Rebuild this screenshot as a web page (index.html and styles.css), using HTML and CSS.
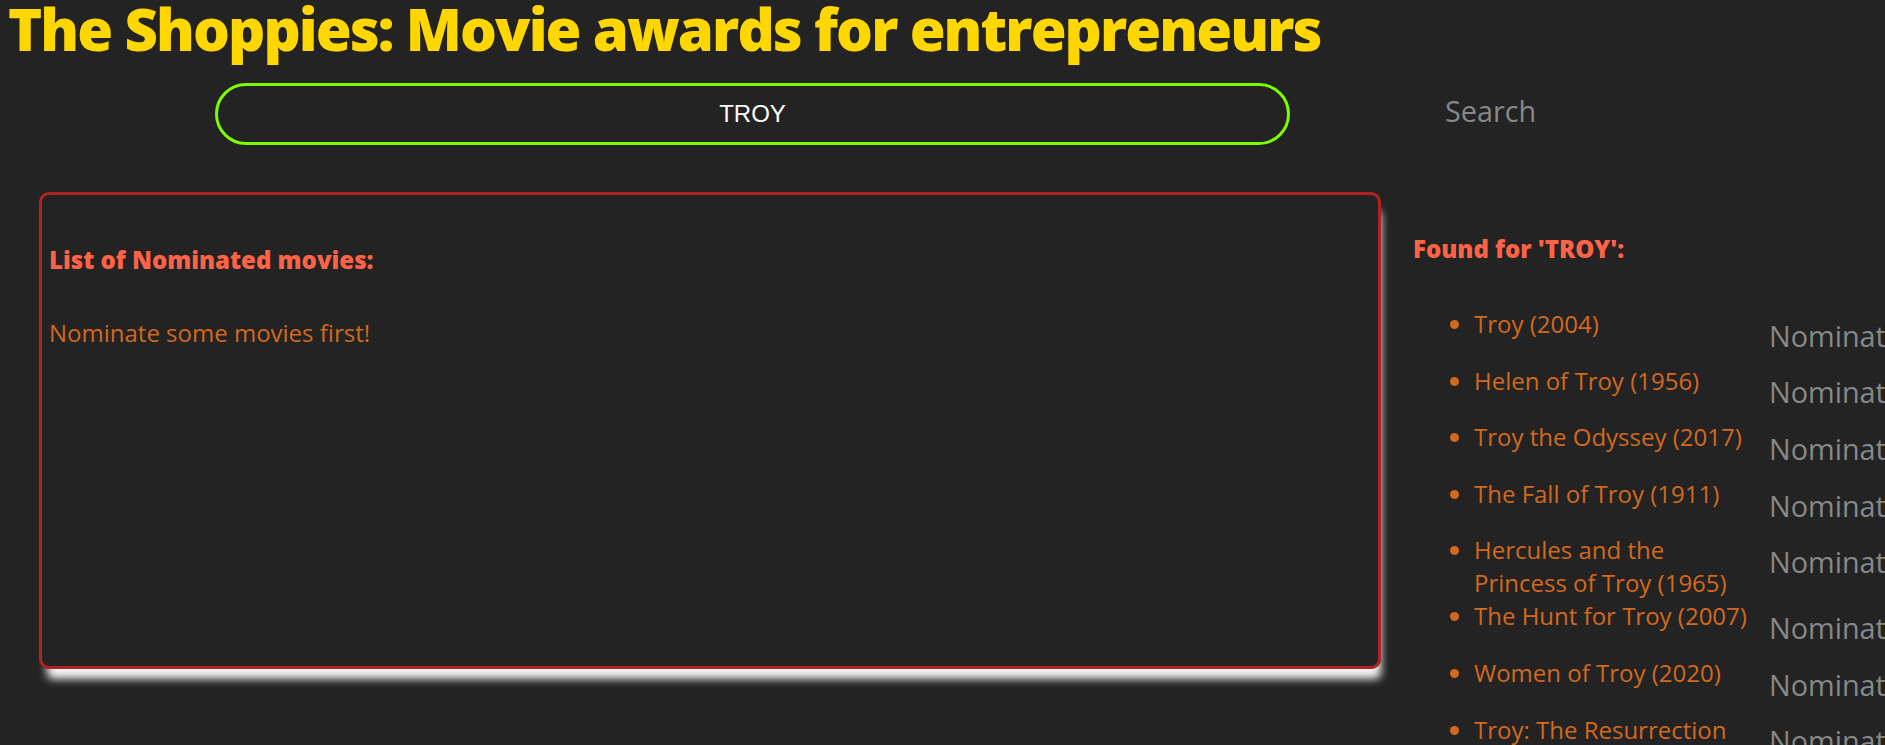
FILE: index.html
```html
<!DOCTYPE html>
<html lang="en">
<head>
<meta charset="utf-8">
<title>The Shoppies</title>
<link rel="stylesheet" href="styles.css">
</head>
<body>
<h1 class="title">The Shoppies: Movie awards for entrepreneurs</h1>
<form class="search">
  <input class="search-input" type="text" value="TROY">
  <button class="btn" type="button">Search</button>
</form>
<main class="content">
  <section class="nominations">
    <h3 class="heading">List of Nominated movies:</h3>
    <p class="empty">Nominate some movies first!</p>
  </section>
  <section class="results">
    <h3 class="heading results-heading">Found for 'TROY':</h3>
    <ul class="movie-list">
      <li><div class="row"><span class="movie">Troy (2004)</span><button class="btn" type="button">Nominate</button></div></li>
      <li><div class="row"><span class="movie">Helen of Troy (1956)</span><button class="btn" type="button">Nominate</button></div></li>
      <li><div class="row"><span class="movie">Troy the Odyssey (2017)</span><button class="btn" type="button">Nominate</button></div></li>
      <li><div class="row"><span class="movie">The Fall of Troy (1911)</span><button class="btn" type="button">Nominate</button></div></li>
      <li><div class="row"><span class="movie">Hercules and the Princess of Troy (1965)</span><button class="btn" type="button">Nominate</button></div></li>
      <li><div class="row"><span class="movie">The Hunt for Troy (2007)</span><button class="btn" type="button">Nominate</button></div></li>
      <li><div class="row"><span class="movie">Women of Troy (2020)</span><button class="btn" type="button">Nominate</button></div></li>
      <li><div class="row"><span class="movie">Troy: The Resurrection (2020)</span><button class="btn" type="button">Nominate</button></div></li>
      <li><div class="row"><span class="movie">Helen of Troy (2003)</span><button class="btn" type="button">Nominate</button></div></li>
      <li><div class="row"><span class="movie">Troy: Fall of a City (2018)</span><button class="btn" type="button">Nominate</button></div></li>
    </ul>
  </section>
</main>
</body>
</html>
```
FILE: styles.css
```css
html, body {
  margin: 0;
  padding: 0;
  background: #232323;
}
body {
  font-family: "Open Sans", "Liberation Sans", sans-serif;
  width: 2100px;
}
.title {
  margin: 0;
  padding-left: 8px;
  font-size: 58px;
  line-height: 1;
  font-weight: 800;
  letter-spacing: -1.9px;
  color: #ffd700;
  white-space: nowrap;
}
.search {
  display: flex;
  align-items: flex-start;
  margin-top: 25px;
  padding-left: 215px;
}
.search-input {
  box-sizing: border-box;
  width: 1075px;
  height: 62px;
  border: 3px solid #7cfc00;
  border-radius: 31px;
  background: transparent;
  color: #ffffff;
  font-family: "Liberation Sans", Arial, sans-serif;
  font-size: 24px;
  text-align: center;
  outline: none;
  padding: 0 20px;
}
.btn {
  background: transparent;
  border: none;
  color: #888888;
  font-family: "Open Sans", sans-serif;
  font-size: 28.8px;
  line-height: normal;
  padding: 8.8px 13px;
  cursor: pointer;
}
.search .btn {
  margin-left: 142px;
  padding-top: 7.5px;
}
.content {
  display: flex;
  align-items: flex-start;
  margin-top: 47px;
  padding-left: 39px;
  gap: 32px;
}
.nominations {
  box-sizing: border-box;
  flex: 0 0 1342px;
  height: 477px;
  border: 3px solid #b22222;
  border-radius: 10px;
  padding: 0 7px;
  box-shadow: 4px 14px 8px -4px rgba(255, 255, 255, 0.95);
}
.heading {
  margin: 48px 0 0;
  font-size: 24px;
  font-weight: 800;
  color: #ff6347;
}
.empty {
  margin: 40px 0 0;
  font-size: 24px;
  color: #d2691e;
}
.results {
  flex: 0 0 auto;
}
.results-heading {
  margin-top: 40px;
}
.movie-list {
  margin: 42px 0 0;
  padding-left: 61px;
  color: #d2691e;
  font-size: 24px;
}
.row {
  display: flex;
  align-items: flex-start;
}
.movie {
  width: 282px;
  flex: 0 0 282px;
}
```
